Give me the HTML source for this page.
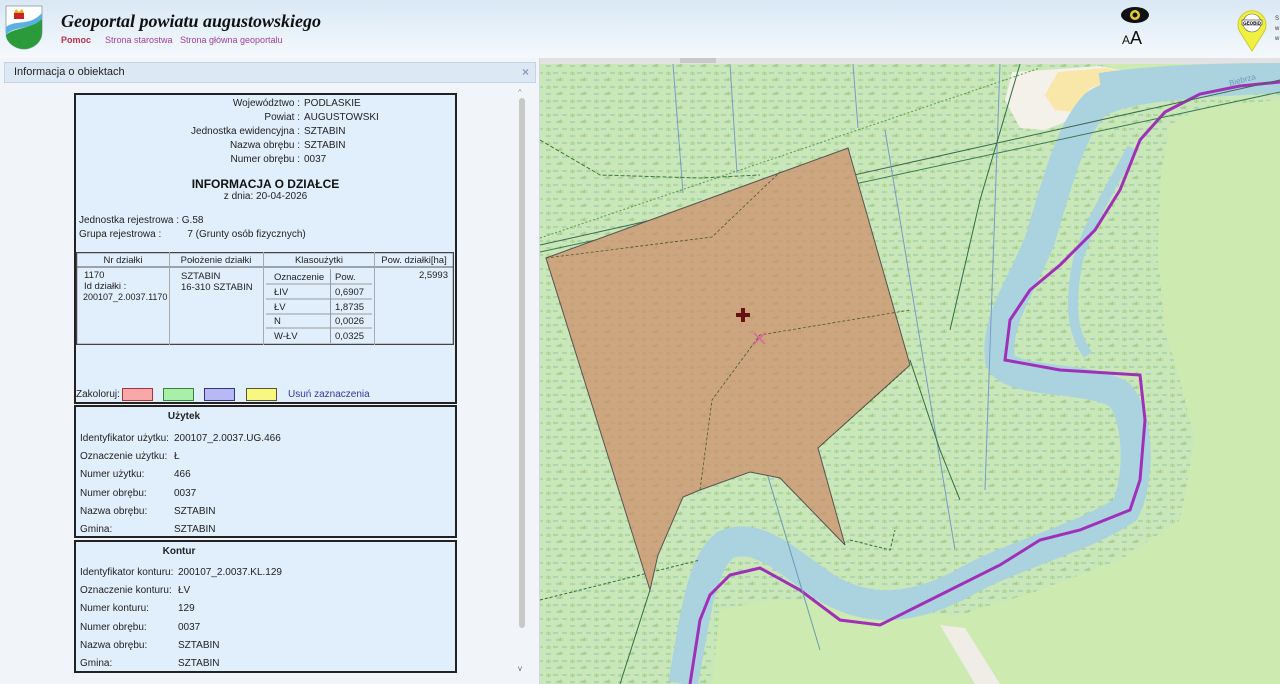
<!DOCTYPE html>
<html><head><meta charset="utf-8"><style>
*{margin:0;padding:0;box-sizing:border-box}
body{width:1280px;height:684px;overflow:hidden;position:relative;font-family:"Liberation Sans",Arial,sans-serif;background:#fff}
.a{position:absolute;white-space:nowrap}
#hdr{position:absolute;left:0;top:0;width:1280px;height:58px;background:linear-gradient(#d9e8f5,#f5f9fd)}
#panel{position:absolute;left:0;top:58px;width:540px;height:626px;background:#f1f5f9;border-right:1px solid #d0d8e0}
.box{position:absolute;left:74px;width:383px;background:#e1eefc;border:2px solid #222}
.t{font-size:10px;color:#222}
.r{font-size:10px;color:#222}
</style></head><body>
<div id="hdr">
 <svg class="a" style="left:5px;top:5px" width="38" height="45" viewBox="0 0 38 45">
  <path d="M1 1H37V27C37 38 27 44 19 44C11 44 1 38 1 27Z" fill="#fff" stroke="#9ab" stroke-width="1"/>
  <path d="M1 30C10 22 20 26 37 14V27C37 38 27 44 19 44C11 44 1 38 1 30Z" fill="#2a9a3a"/>
  <path d="M1 22C12 14 24 22 37 8V14C24 26 10 20 1 30Z" fill="#5ab0e0"/>
  <rect x="9" y="8" width="10" height="6" fill="#c22"/><path d="M9 8L11 4L14 7L17 4L19 8Z" fill="#e0b020"/>
 </svg>
 <div class="a" style="left:61px;top:11px;font-family:'Liberation Serif',serif;font-style:italic;font-weight:bold;font-size:18px;color:#111">Geoportal powiatu augustowskiego</div>
 <div class="a" style="left:61px;top:35px;font-size:9px;color:#c0304a;font-weight:bold">Pomoc</div>
 <div class="a" style="left:105px;top:35px;font-size:9px;color:#a040a0">Strona starostwa</div>
 <div class="a" style="left:180px;top:35px;font-size:9px;color:#a040a0">Strona główna geoportalu</div>
 <svg class="a" style="left:1120px;top:6px" width="30" height="18" viewBox="0 0 30 18"><ellipse cx="15" cy="9" rx="14" ry="8" fill="#111"/><circle cx="15" cy="9" r="5" fill="#e8d020"/><circle cx="15" cy="9" r="2.5" fill="#111"/></svg>
 <div class="a" style="left:1122px;top:28px;font-size:18px;color:#111"><span style="font-size:12px">A</span>A</div>
 <svg class="a" style="left:1236px;top:8px" width="32" height="44" viewBox="0 0 32 44"><path d="M16 43L4 24A14 14 0 1 1 28 24Z" fill="#f0f040" stroke="#cc3" stroke-width="1"/><circle cx="16" cy="15" r="9" fill="#fff" stroke="#666" stroke-width=".6"/><rect x="6" y="12" width="20" height="5" fill="#fff" stroke="#333" stroke-width=".6"/><text x="16" y="16.3" font-size="4.5" text-anchor="middle" font-family="Liberation Sans" font-weight="bold">GEOBID</text></svg>
 <div class="a" style="left:1275px;top:14px;font-size:6px;color:#333;line-height:10px">S<br>w<br>w</div>
</div>
<div id="panel">
 <div class="a" style="left:4px;top:4px;width:532px;height:21px;background:#dce8f4;border:1px solid #c4d4e4"></div>
 <div class="a" style="left:14px;top:8px;font-size:11px;color:#222">Informacja o obiektach</div>
 <div class="a" style="left:522px;top:7px;font-size:12px;color:#8aa0b8;font-weight:bold">×</div>
 <div class="a" style="left:519px;top:40px;width:6px;height:530px;background:#c8c8c8;border-radius:3px"></div>
 <div class="a" style="left:518px;top:30px;font-size:8px;color:#999">^</div>
 <div class="a" style="left:518px;top:606px;font-size:8px;color:#666">v</div>
</div>
<div class="box" style="top:93px;height:311px"></div>
<div class="a r" style="left:130px;width:170px;text-align:right;top:97px;line-height:14px">Województwo :<br>Powiat :<br>Jednostka ewidencyjna :<br>Nazwa obrębu :<br>Numer obrębu :</div>
<div class="a r" style="left:304px;top:97px;line-height:14px">PODLASKIE<br>AUGUSTOWSKI<br>SZTABIN<br>SZTABIN<br>0037</div>
<div class="a" style="left:74px;width:383px;text-align:center;top:177px;font-size:12px;font-weight:bold;color:#111">INFORMACJA O DZIAŁCE</div>
<div class="a r" style="left:74px;width:383px;text-align:center;top:191px">z dnia: 20-04-2026</div>
<div class="a r" style="left:79px;top:214px;line-height:14px">Jednostka rejestrowa :<br>Grupa rejestrowa :</div>
<div class="a r" style="left:179px;top:214px;line-height:14px">&nbsp;G.58<br>&nbsp;&nbsp;&nbsp;7 (Grunty osób fizycznych)</div>
<svg class="a" style="left:76px;top:252px" width="378" height="93">
 <g fill="none" stroke="#555" stroke-width="1">
  <rect x="0.5" y="0.5" width="377" height="92" stroke="#444" stroke-width="1.5"/>
  <line x1="0" y1="15" x2="378" y2="15"/>
  <line x1="93.5" y1="0" x2="93.5" y2="93" stroke="#aaa"/>
  <line x1="187.5" y1="0" x2="187.5" y2="93" stroke="#aaa"/>
  <line x1="298.5" y1="0" x2="298.5" y2="93" stroke="#aaa"/>
  <line x1="190" y1="32" x2="296" y2="32" stroke="#999"/><line x1="190" y1="47" x2="296" y2="47" stroke="#999"/><line x1="190" y1="62" x2="296" y2="62" stroke="#999"/><line x1="190" y1="76" x2="296" y2="76" stroke="#999"/>
  <line x1="254.5" y1="17" x2="254.5" y2="91" stroke="#999"/>
 </g>
 <g font-family="Liberation Sans" font-size="9.5" fill="#222">
  <text x="47" y="11" text-anchor="middle">Nr działki</text><text x="140" y="11" text-anchor="middle">Położenie działki</text><text x="243" y="11" text-anchor="middle">Klasoużytki</text><text x="338" y="11" text-anchor="middle">Pow. działki[ha]</text>
  <text x="8" y="26">1170</text><text x="8" y="37">Id działki :</text><text x="7" y="48" font-size="9">200107_2.0037.1170</text>
  <text x="105" y="27">SZTABIN</text><text x="105" y="38">16-310 SZTABIN</text>
  <text x="198" y="28">Oznaczenie</text><text x="259" y="28">Pow.</text>
  <text x="198" y="43">ŁIV</text><text x="259" y="43">0,6907</text>
  <text x="198" y="58">ŁV</text><text x="259" y="58">1,8735</text>
  <text x="198" y="72">N</text><text x="259" y="72">0,0026</text>
  <text x="198" y="87">W-ŁV</text><text x="259" y="87">0,0325</text>
  <text x="372" y="26" text-anchor="end">2,5993</text>
 </g>
</svg>
<div class="a r" style="left:76px;top:389px">Zakoloruj:</div>
<div class="a" style="left:122px;top:388px;width:31px;height:13px;background:#f8a8a8;border:1px solid #a33"></div>
<div class="a" style="left:163px;top:388px;width:31px;height:13px;background:#a8f0a8;border:1px solid #383"></div>
<div class="a" style="left:204px;top:388px;width:31px;height:13px;background:#b8b8f4;border:1px solid #338"></div>
<div class="a" style="left:246px;top:388px;width:31px;height:13px;background:#f8f880;border:1px solid #553"></div>
<div class="a" style="left:288px;top:389px;font-size:10px;color:#3838a0">Usuń zaznaczenia</div>
<div class="box" style="top:405px;height:133px"></div>
<div class="a" style="left:74px;width:220px;text-align:center;top:411px;font-size:10px;font-weight:bold;color:#222">Użytek</div>
<div class="a t" style="left:80px;top:430px;line-height:18.2px">Identyfikator użytku:<br>Oznaczenie użytku:<br>Numer użytku:<br>Numer obrębu:<br>Nazwa obrębu:<br>Gmina:</div>
<div class="a t" style="left:174px;top:430px;line-height:18.2px">200107_2.0037.UG.466<br>Ł<br>466<br>0037<br>SZTABIN<br>SZTABIN</div>
<div class="box" style="top:540px;height:133px"></div>
<div class="a" style="left:74px;width:210px;text-align:center;top:546px;font-size:10px;font-weight:bold;color:#222">Kontur</div>
<div class="a t" style="left:80px;top:564px;line-height:18.2px">Identyfikator konturu:<br>Oznaczenie konturu:<br>Numer konturu:<br>Numer obrębu:<br>Nazwa obrębu:<br>Gmina:</div>
<div class="a t" style="left:178px;top:564px;line-height:18.2px">200107_2.0037.KL.129<br>ŁV<br>129<br>0037<br>SZTABIN<br>SZTABIN</div>

<svg class="a" style="left:540px;top:58px" width="740" height="626" viewBox="540 58 740 626">
 <defs>
  <pattern id="m" width="24" height="14" patternUnits="userSpaceOnUse">
   <rect width="24" height="14" fill="#c9e7b9"/>
   <path d="M1 3h5M10 3h5M18 10h5M4 10h5" stroke="#8fc3a8" stroke-width=".9"/>
   <path d="M19 2v3M20.5 1.5v3.5M22 2v3M7 8v3M8.5 7.5v3.5M10 8v3" stroke="#9ccc80" stroke-width=".8"/>
  </pattern>
  <pattern id="b" width="24" height="14" patternUnits="userSpaceOnUse">
   <rect width="24" height="14" fill="#cda57e"/>
   <path d="M1 3h5M10 3h5M18 10h5M4 10h5" stroke="#b89a78" stroke-width=".8"/>
   <path d="M19 2v3M20.5 1.5v3.5M22 2v3M7 8v3M8.5 7.5v3.5M10 8v3" stroke="#b8a070" stroke-width=".7"/>
  </pattern>
 </defs>
 <rect x="540" y="58" width="740" height="626" fill="url(#m)"/>
 <rect x="540" y="58" width="740" height="6" fill="#e2e2e2"/>
 <rect x="680" y="58" width="36" height="5" fill="#c8c8c8"/>
 <!-- plain green -->
 <path d="M1280 100L1200 108L1170 125L1160 180L1158 260L1165 330L1180 380L1195 440L1180 520L1120 560L1040 590L960 615L900 615L840 600L770 600L720 610L712 684H1280Z" fill="#cdebb0"/>
 <path d="M1105 64H1280V72L1130 80Z" fill="#cdebb0"/>
 <!-- sand -->
 <path d="M1045 70L1100 66L1130 72L1090 90L1070 120L1045 130L1020 128L1005 100L1012 72Z" fill="#f4f0ea"/>
 <path d="M1058 72L1105 68L1140 74L1090 88L1075 112L1055 110L1045 95Z" fill="#f8e7a8"/>
 <path d="M940 625L975 684H1000L965 628Z" fill="#f0ece6"/>
 <!-- river -->
 <path d="M1280 78C1200 82 1120 86 1095 105C1070 130 1055 190 1040 240C1020 290 995 320 1000 360C1010 385 1090 375 1120 395C1140 420 1140 480 1125 510C1080 540 1010 555 960 585C910 610 870 612 830 590C790 565 760 530 725 545C700 565 695 620 683 684" fill="none" stroke="#aad3df" stroke-width="30"/>
 <path d="M1280 72C1220 72 1150 74 1100 82" fill="none" stroke="#aad3df" stroke-width="18"/>
 <path d="M1132 148C1110 190 1090 220 1078 260C1070 300 1070 330 1088 355" fill="none" stroke="#aad3df" stroke-width="10"/>
 <!-- purple boundary -->
 <path d="M1280 82L1240 86L1200 94L1165 112L1140 140L1120 190L1095 230L1060 265L1030 290L1010 320L1005 360L1060 370L1140 375L1145 420L1140 480L1130 510L1080 530L1040 540L1000 565L930 600L880 625L840 620L800 590L760 568L730 575L710 595L700 620L690 684" fill="none" stroke="#a030b8" stroke-width="3"/>
 <g fill="none" stroke-width="1">
  <path d="M540 245L1280 80" stroke="#3a6a4a"/>
  <path d="M540 252L1280 92" stroke="#3a7a4a"/>
  <path d="M540 238L1040 68" stroke="#5a9a4a" stroke-dasharray="2 2"/>
  <path d="M673 64L683 193M730 64L737 173M853 64L858 128M885 130L955 550M1000 64L985 490" stroke="#7a9ac8"/>
  <path d="M540 140L600 175L700 178L760 175" stroke="#3a7a3a" stroke-dasharray="4 2"/>
  <path d="M760 450L820 650" stroke="#6a9ab8"/>
  <path d="M650 590L620 684M910 360L940 450L960 500M1020 64L980 200L950 330" stroke="#2f6f3f"/>
  <path d="M540 600L700 560M850 540L890 550L895 530" stroke="#2f6f3f" stroke-dasharray="3 2"/>
 </g>
 <path d="M546 258L848 148L910 365L818 448L845 545L780 478L750 472L700 490L683 497L658 555L650 590Z" fill="url(#b)" stroke="#555" stroke-width="1"/>
 <path d="M546 258L712 237L780 172M700 490L712 400L760 335L910 310M818 448L905 370" fill="none" stroke="#4a5a2a" stroke-width=".8" stroke-dasharray="3 2"/>
 <path d="M743 308V322M736 315H750" stroke="#6a1010" stroke-width="4"/>
 <path d="M754 333L765 344M765 333L754 344" stroke="#e060a0" stroke-width="1.5"/>
 <text x="1230" y="86" font-size="8" fill="#6a9ab8" font-family="Liberation Sans" transform="rotate(-15 1230 86)">Biebrza</text>
</svg>
</body></html>
